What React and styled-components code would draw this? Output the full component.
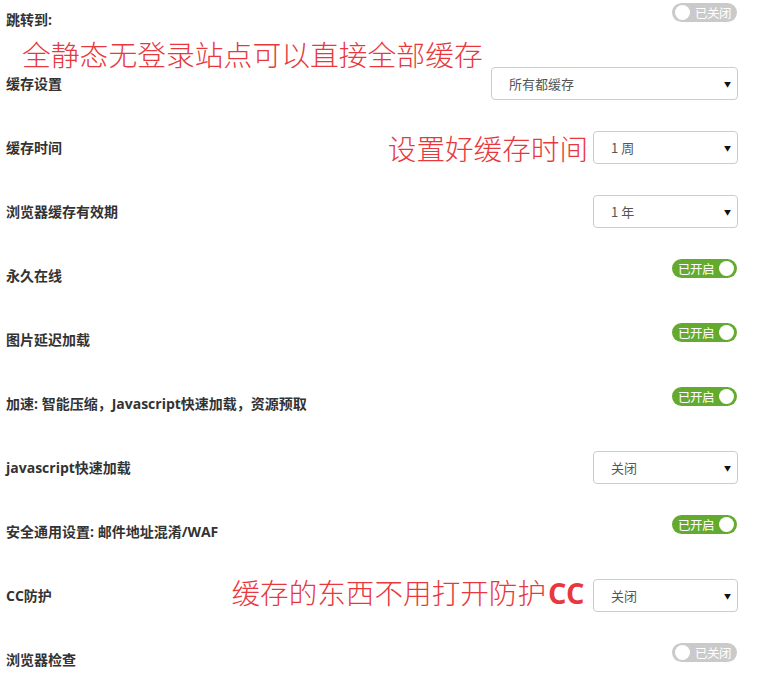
import React from "react";
import styled, { createGlobalStyle } from "styled-components";

const GlobalStyle = createGlobalStyle`
  html, body {
    margin: 0;
    padding: 0;
    background: #fff;
    overflow: hidden;
  }
  body {
    font-family: "Open Sans", "Noto Sans CJK SC", sans-serif;
  }
`;

const settings = [
  { label: "跳转到:", type: "toggle", on: false },
  { label: "缓存设置", type: "select", value: "所有都缓存", wide: true },
  { label: "缓存时间", type: "select", value: "1 周", note: "设置好缓存时间" },
  { label: "浏览器缓存有效期", type: "select", value: "1 年" },
  { label: "永久在线", type: "toggle", on: true },
  { label: "图片延迟加载", type: "toggle", on: true },
  {
    label: "加速: 智能压缩，Javascript快速加载，资源预取",
    type: "toggle",
    on: true,
  },
  { label: "javascript快速加载", type: "select", value: "关闭" },
  { label: "安全通用设置: 邮件地址混淆/WAF", type: "toggle", on: true },
  {
    label: "CC防护",
    type: "select",
    value: "关闭",
    note: "缓存的东西不用打开防护",
    noteBold: "CC",
    raised: true,
  },
  { label: "浏览器检查", type: "toggle", on: false },
];

// Component
const App = () => {
  return (
    <Page>
      <GlobalStyle />
      <Overlay>全静态无登录站点可以直接全部缓存</Overlay>
      {settings.map((item) => (
        <Row key={item.label}>
          <Label>{item.label}</Label>
          {item.note && (
            <Note $raised={item.raised}>
              {item.note}
              {item.noteBold && <Strong>{item.noteBold}</Strong>}
            </Note>
          )}
          {item.type === "toggle" ? (
            <Toggle $on={item.on}>
              <Knob />
              <ToggleText>{item.on ? "已开启" : "已关闭"}</ToggleText>
            </Toggle>
          ) : (
            <Select $wide={item.wide}>
              <span>{item.value}</span>
              <Arrow>▼</Arrow>
            </Select>
          )}
        </Row>
      ))}
    </Page>
  );
};

// Styles
const Page = styled.div`
  position: relative;
  width: 757px;
  box-sizing: border-box;
  padding: 0 19px 0 6px;
`;
const Overlay = styled.div`
  position: absolute;
  left: 22px;
  top: 38px;
  font-family: "Noto Sans CJK SC", sans-serif;
  font-weight: 300;
  font-size: 28.8px;
  line-height: 32px;
  color: #e8383d;
  white-space: nowrap;
`;
const Row = styled.div`
  display: flex;
  align-items: flex-start;
  height: 64px;
  box-sizing: border-box;
  padding-top: 3px;
`;
const Label = styled.div`
  flex: 1;
  margin-top: 7px;
  font-size: 14px;
  line-height: 20px;
  font-weight: 700;
  color: #333;
  white-space: nowrap;
`;
const Note = styled.div`
  margin: ${(p) => (p.$raised ? "-3px 9px 0 0" : "1px 5px 0 0")};
  font-family: "Noto Sans CJK SC", sans-serif;
  font-weight: 300;
  font-size: 28.6px;
  line-height: 32px;
  color: #e8383d;
  white-space: nowrap;
`;
const Strong = styled.span`
  font-family: "Open Sans", sans-serif;
  font-weight: 700;
  font-size: 29px;
  letter-spacing: -0.5px;
  margin-left: 2px;
`;
const Toggle = styled.div`
  display: flex;
  flex-direction: ${(p) => (p.$on ? "row-reverse" : "row")};
  justify-content: space-between;
  align-items: center;
  width: 65px;
  height: 19px;
  margin-right: 1px;
  box-sizing: border-box;
  padding: 0 3px;
  border-radius: 10px;
  background: ${(p) => (p.$on ? "#64aa2f" : "#cacaca")};
`;
const Knob = styled.span`
  width: 15px;
  height: 15px;
  border-radius: 50%;
  background: #fff;
`;
const ToggleText = styled.span`
  font-family: "Noto Sans CJK SC", sans-serif;
  font-size: 12.5px;
  line-height: 19px;
  color: #fff;
  margin: 0 3px 0 3px;
  letter-spacing: -0.5px;
`;
const Select = styled.div`
  display: flex;
  justify-content: space-between;
  align-items: center;
  width: ${(p) => (p.$wide ? "247px" : "145px")};
  height: 33px;
  box-sizing: border-box;
  padding: 0 6px 0 17px;
  border: 1px solid #cccccc;
  border-radius: 4px;
  font-family: "Noto Sans CJK SC", sans-serif;
  font-size: 13px;
  color: #555;
`;
const Arrow = styled.span`
  font-size: 7px;
  color: #111;
`;

export default App;
